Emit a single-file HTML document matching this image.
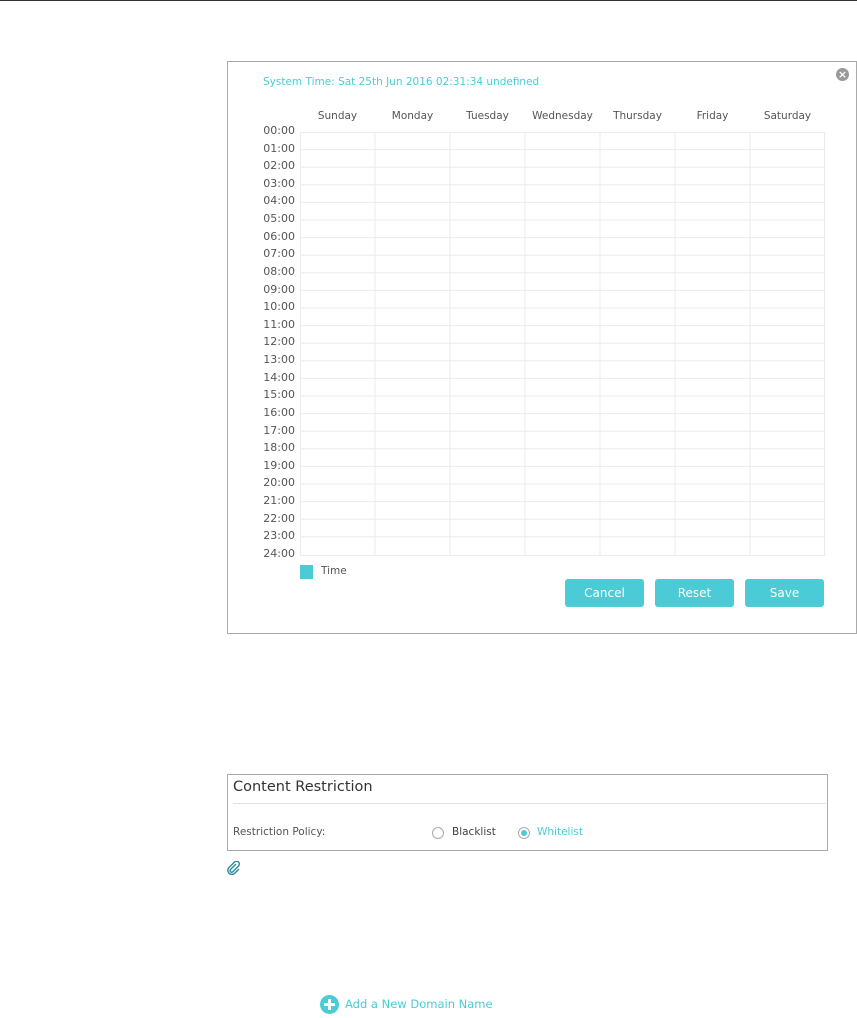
<!DOCTYPE html><html><head><style>
body{margin:0;width:857px;height:1018px;position:relative;background:#fff;font-family:"DejaVu Sans","Liberation Sans",sans-serif;overflow:hidden}
.a{position:absolute}
.btn{position:absolute;top:579px;width:79px;height:28px;background:#4acbd6;border-radius:3px;color:#fff;font-size:12px;text-align:center;line-height:28px}
.hr{position:absolute;right:562px;font-size:11px;color:#555;width:60px;text-align:right}
.d{position:absolute;top:110px;width:75px;text-align:center;font-size:10.5px;color:#555}
</style></head><body>
<div class="a" style="left:0;top:0;width:857px;height:1px;background:#333"></div>
<div class="a" style="left:227px;top:61px;width:628px;height:571px;border:1px solid #aaa"></div>
<div class="a" style="left:263px;top:76px;font-size:10.5px;color:#4acbd6">System Time: Sat 25th Jun 2016 02:31:34 undefined</div>
<div class="a" style="left:836px;top:68px;width:13px;height:13px;border-radius:50%;background:#999;color:#fff;font-size:11px;line-height:13px;text-align:center;font-weight:bold">×</div>
<div class="d" style="left:300px">Sunday</div><div class="d" style="left:375px">Monday</div><div class="d" style="left:450px">Tuesday</div><div class="d" style="left:525px">Wednesday</div><div class="d" style="left:600px">Thursday</div><div class="d" style="left:675px">Friday</div><div class="d" style="left:750px">Saturday</div>
<svg class="a" style="left:300px;top:132px" width="525" height="424">
<g stroke="#ebebeb" stroke-width="1">
<line x1="0.5" y1="0" x2="0.5" y2="424"/><line x1="75" y1="0" x2="75" y2="424"/><line x1="150" y1="0" x2="150" y2="424"/><line x1="225" y1="0" x2="225" y2="424"/><line x1="300" y1="0" x2="300" y2="424"/><line x1="375" y1="0" x2="375" y2="424"/><line x1="450" y1="0" x2="450" y2="424"/><line x1="524.5" y1="0" x2="524.5" y2="424"/>
<line x1="0" y1="0.5" x2="525" y2="0.5"/><line x1="0" y1="17.6" x2="525" y2="17.6"/><line x1="0" y1="35.2" x2="525" y2="35.2"/><line x1="0" y1="52.8" x2="525" y2="52.8"/><line x1="0" y1="70.4" x2="525" y2="70.4"/><line x1="0" y1="88" x2="525" y2="88"/><line x1="0" y1="105.6" x2="525" y2="105.6"/><line x1="0" y1="123.2" x2="525" y2="123.2"/><line x1="0" y1="140.8" x2="525" y2="140.8"/><line x1="0" y1="158.4" x2="525" y2="158.4"/><line x1="0" y1="176" x2="525" y2="176"/><line x1="0" y1="193.6" x2="525" y2="193.6"/><line x1="0" y1="211.2" x2="525" y2="211.2"/><line x1="0" y1="228.8" x2="525" y2="228.8"/><line x1="0" y1="246.4" x2="525" y2="246.4"/><line x1="0" y1="264" x2="525" y2="264"/><line x1="0" y1="281.6" x2="525" y2="281.6"/><line x1="0" y1="299.2" x2="525" y2="299.2"/><line x1="0" y1="316.8" x2="525" y2="316.8"/><line x1="0" y1="334.4" x2="525" y2="334.4"/><line x1="0" y1="352" x2="525" y2="352"/><line x1="0" y1="369.6" x2="525" y2="369.6"/><line x1="0" y1="387.2" x2="525" y2="387.2"/><line x1="0" y1="404.8" x2="525" y2="404.8"/><line x1="0" y1="423.5" x2="525" y2="423.5"/>
</g></svg>
<div class="hr" style="top:124px">00:00</div><div class="hr" style="top:142px">01:00</div><div class="hr" style="top:159px">02:00</div><div class="hr" style="top:177px">03:00</div><div class="hr" style="top:194px">04:00</div><div class="hr" style="top:212px">05:00</div><div class="hr" style="top:230px">06:00</div><div class="hr" style="top:247px">07:00</div><div class="hr" style="top:265px">08:00</div><div class="hr" style="top:283px">09:00</div><div class="hr" style="top:300px">10:00</div><div class="hr" style="top:318px">11:00</div><div class="hr" style="top:335px">12:00</div><div class="hr" style="top:353px">13:00</div><div class="hr" style="top:371px">14:00</div><div class="hr" style="top:388px">15:00</div><div class="hr" style="top:406px">16:00</div><div class="hr" style="top:424px">17:00</div><div class="hr" style="top:441px">18:00</div><div class="hr" style="top:459px">19:00</div><div class="hr" style="top:476px">20:00</div><div class="hr" style="top:494px">21:00</div><div class="hr" style="top:512px">22:00</div><div class="hr" style="top:529px">23:00</div><div class="hr" style="top:547px">24:00</div>
<div class="a" style="left:300px;top:565px;width:13px;height:14px;background:#4acbd6"></div>
<div class="a" style="left:321px;top:565px;font-size:10.5px;color:#555">Time</div>
<div class="btn" style="left:565px">Cancel</div><div class="btn" style="left:655px">Reset</div><div class="btn" style="left:745px">Save</div>
<div class="a" style="left:227px;top:774px;width:599px;height:75px;border:1px solid #aaa"></div>
<div class="a" style="left:233px;top:779px;font-size:14.5px;color:#333">Content Restriction</div>
<div class="a" style="left:233px;top:803px;width:593px;height:1px;background:#e0e0e0"></div>
<div class="a" style="left:233px;top:826px;font-size:10.5px;color:#555">Restriction Policy:</div>
<div class="a" style="left:432px;top:827px;width:10px;height:10px;border:1px solid #aaa;border-radius:50%"></div>
<div class="a" style="left:452px;top:826px;font-size:10.5px;color:#444">Blacklist</div>
<div class="a" style="left:518px;top:827px;width:10px;height:10px;border:1px solid #aaa;border-radius:50%"></div>
<div class="a" style="left:521px;top:830px;width:6px;height:6px;background:#4acbd6;border-radius:50%"></div>
<div class="a" style="left:537px;top:826px;font-size:10.5px;color:#4acbd6">Whitelist</div>
<svg class="a" style="left:227px;top:861px" width="14" height="14"><path d="M9 3 L3.5 8.5 a1.6 1.6 0 0 0 2.3 2.3 L11.5 5 a2.8 2.8 0 0 0-4-4 L2 6.5 a4 4 0 0 0 5.7 5.7 L12 8" fill="none" stroke="#2a8a96" stroke-width="1.4"/></svg>
<div class="a" style="left:320px;top:995px;width:19px;height:19px;border-radius:50%;background:#4acbd6"></div>
<div class="a" style="left:328px;top:999px;width:3px;height:11px;background:#fff"></div>
<div class="a" style="left:324px;top:1003px;width:11px;height:3px;background:#fff"></div>
<div class="a" style="left:345px;top:997px;font-size:11.5px;color:#4acbd6">Add a New Domain Name</div>
</body></html>
